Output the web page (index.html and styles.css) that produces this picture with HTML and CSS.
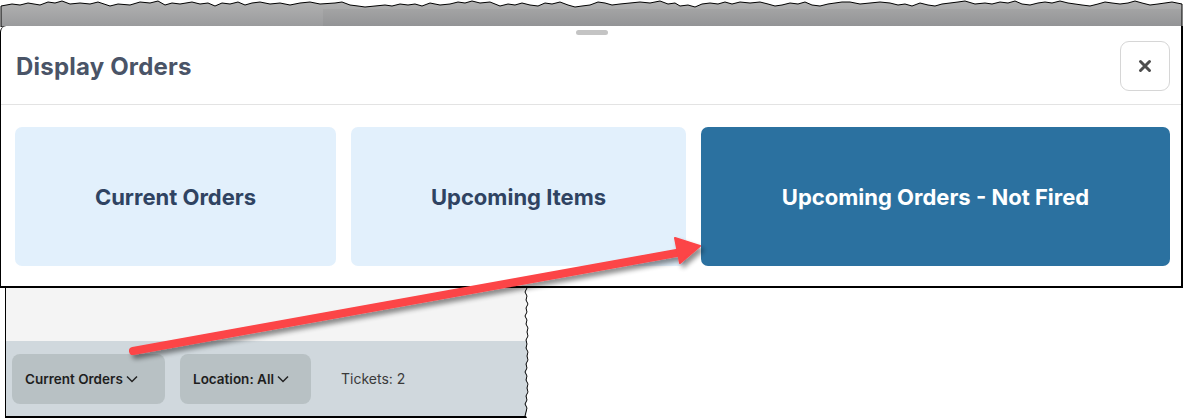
FILE: index.html
```html
<!DOCTYPE html>
<html lang="en">
<head>
    <meta charset="UTF-8">
    <title>Display Orders</title>
    <link rel="stylesheet" href="styles.css">
</head>
<body>
    <div class="shot">
        <div class="torn-top">
            <svg width="1183" height="27" viewBox="0 0 1183 27">
                <defs>
                    <linearGradient id="tg" x1="0" y1="0" x2="0" y2="1">
                        <stop offset="0" stop-color="#b2b2b2"/>
                        <stop offset="1" stop-color="#999a9c"/>
                    </linearGradient>
                </defs>
                <path d="M1 27 L1 6 L12 4 L20 5 L28 3 L40 5 L48 2 L55 3 L62 1 L70 4 L80 3 L90 4 L98 2 L110 6 L118 4 L130 5 L140 2 L150 3 L158 1 L165 5 L172 3 L180 4 L192 2 L200 4 L208 3 L215 6 L222 3 L230 4 L238 2 L245 5 L252 3 L260 2 L270 4 L280 3 L290 5 L300 3 L310 2 L320 4 L335 3 L342 2 L350 5 L358 6 L365 7 L375 6 L385 5 L392 6 L400 4 L408 5 L415 4 L422 6 L430 3 L440 5 L450 4 L458 2 L465 3 L472 1 L480 3 L490 2 L500 6 L508 4 L515 5 L522 3 L530 5 L538 6 L545 3 L552 4 L560 2 L568 5 L575 7 L582 6 L590 5 L598 2 L605 3 L612 5 L620 4 L630 3 L640 2 L650 3 L660 1 L668 4 L675 3 L680 6 L688 5 L695 7 L702 4 L710 3 L718 4 L725 2 L732 4 L740 2 L750 3 L760 2 L768 4 L775 6 L782 5 L790 3 L798 4 L805 2 L812 5 L820 6 L828 4 L835 3 L842 2 L850 2 L860 4 L870 3 L880 2 L890 3 L898 5 L905 4 L912 6 L920 3 L928 5 L935 6 L942 4 L950 3 L958 2 L965 1 L975 4 L985 3 L992 4 L1000 2 L1008 3 L1015 1 L1022 4 L1030 5 L1038 3 L1045 2 L1052 3 L1060 1 L1068 3 L1075 4 L1082 5 L1090 6 L1098 4 L1105 2 L1112 3 L1120 4 L1128 3 L1135 1 L1142 3 L1150 5 L1158 4 L1165 3 L1172 2 L1182 4 L1182 27 Z" fill="url(#tg)" stroke="#000" stroke-width="1"/>
                <rect x="323" y="9" width="859" height="18" fill="#000" opacity="0.04"/>
            </svg>
        </div>

        <div class="modal">
            <div class="handle"></div>
            <div class="modal-head">
                <h1 class="title">Display Orders</h1>
                <button class="close">
                    <svg width="14" height="14" viewBox="0 0 14 14">
                        <path d="M2.5 2.5 L11.5 11.5 M11.5 2.5 L2.5 11.5" stroke="#4d4d4d" stroke-width="3" stroke-linecap="round"/>
                    </svg>
                </button>
            </div>
            <div class="options">
                <button class="option">Current Orders</button>
                <button class="option">Upcoming Items</button>
                <button class="option active">Upcoming Orders - Not Fired</button>
            </div>
        </div>

        <div class="under">
            <div class="blank"></div>
            <div class="toolbar">
                <button class="drop">Current Orders
                    <svg width="12" height="8" viewBox="0 0 12 8"><path d="M1 1.5 L6 6.5 L11 1.5" fill="none" stroke="#222" stroke-width="1.5"/></svg>
                </button>
                <button class="drop">Location: All
                    <svg width="12" height="8" viewBox="0 0 12 8"><path d="M1 1.5 L6 6.5 L11 1.5" fill="none" stroke="#222" stroke-width="1.5"/></svg>
                </button>
                <span class="tickets">Tickets: 2</span>
            </div>
            <svg class="torn-right" width="12" height="132" viewBox="0 0 12 132">
                <path d="M6 0 L4 4 L6 8 L5 12 L7 16 L5 20 L6 24 L4 28 L6 32 L5 36 L7 40 L6 44 L7 48 L5 52 L6 56 L5 60 L7 64 L6 68 L7 72 L5 76 L6 80 L4 84 L6 88 L5 92 L7 96 L6 100 L7 104 L5 108 L6 112 L4 116 L6 120 L5 124 L4 128 L6 132" fill="none" stroke="#000" stroke-width="1"/>
                <path d="M7 0 L5 4 L7 8 L6 12 L8 16 L6 20 L7 24 L5 28 L7 32 L6 36 L8 40 L7 44 L8 48 L6 52 L7 56 L6 60 L8 64 L7 68 L8 72 L6 76 L7 80 L5 84 L7 88 L6 92 L8 96 L7 100 L8 104 L6 108 L7 112 L5 116 L7 120 L6 124 L5 128 L7 132 L12 132 L12 0 Z" fill="#fff"/>
            </svg>
        </div>

        <svg class="arrow" width="1183" height="418" viewBox="0 0 1183 418">
            <defs>
                <filter id="sh" x="-10%" y="-10%" width="120%" height="130%">
                    <feGaussianBlur in="SourceAlpha" stdDeviation="2.5"/>
                    <feOffset dx="3" dy="4"/>
                    <feComponentTransfer><feFuncA type="linear" slope="0.45"/></feComponentTransfer>
                    <feMerge><feMergeNode/><feMergeNode in="SourceGraphic"/></feMerge>
                </filter>
            </defs>
            <g filter="url(#sh)">
                <line x1="133" y1="351" x2="682" y2="252" stroke="#fc4447" stroke-width="8" stroke-linecap="round"/>
                <path d="M675 238 L700 246 L680 263 Z" fill="#fc4447" stroke="#fc4447" stroke-width="2" stroke-linejoin="round"/>
            </g>
        </svg>
    </div>
</body>
</html>
```

FILE: styles.css
```css
body{
    margin:0;
    padding:0;
    background-color: #fff;
    font-family: Inter, "Noto Sans", sans-serif;
}

.shot{
    position: relative;
    width:1183px;
    height:418px;
    overflow: hidden;
}

.torn-top{
    height:27px;
    margin-bottom:-1px;
}
.torn-top svg{
    display: block;
}

.modal{
    background-color: #fff;
    border-left: 1px solid #000;
    border-right: 2px solid #000;
    border-bottom: 2px solid #000;
    border-top-left-radius: 6px;
    height:260px;
    box-sizing: content-box;
    position: relative;
}
.handle{
    position: absolute;
    top:4px;
    left:575px;
    width:32px;
    height:5px;
    border-radius: 3px;
    background-color: #c4c4c4;
}
.modal-head{
    display: flex;
    align-items: center;
    justify-content: space-between;
    height:79px;
    padding:3px 11px 0 15px;
    box-sizing: border-box;
    border-bottom: 1px solid #e3e3e3;
}
.title{
    margin:0;
    font-size: 24px;
    font-weight: 700;
    color: #4a5467;
    letter-spacing: 0.2px;
}
.close{
    width:50px;
    height:50px;
    margin-top:-2px;
    border:1px solid #d6d6d6;
    border-radius: 9px;
    background-color: #fff;
    display: flex;
    align-items: center;
    justify-content: center;
    padding:0;
}

.options{
    display: grid;
    grid-template-columns: 321px 335px 469px;
    gap:15px;
    padding:22px 0 0 14px;
}
.option{
    height:139px;
    border:none;
    border-radius: 7px;
    background-color: #e2f0fc;
    color: #2f4362;
    font-family: Inter, "Noto Sans", sans-serif;
    font-size: 22px;
    font-weight: 700;
    padding:0;
}
.option.active{
    background-color: #2b71a0;
    color: #fff;
}

.under{
    position: relative;
    width:521px;
    height:128px;
    border-left: 1px solid #000;
    border-bottom: 2px solid #000;
    margin-left:5px;
}
.blank{
    height:53px;
    background-color: #f4f4f4;
}
.toolbar{
    height:75px;
    background-color: #d0d8dd;
    display: flex;
    align-items: center;
    gap:15px;
    padding-left:6px;
}
.drop{
    height:50px;
    border:none;
    border-radius: 8px;
    background-color: #b8c1c4;
    font-family: Inter, "Noto Sans", sans-serif;
    font-size: 13.5px;
    font-weight: 600;
    color: #1e1e1e;
    display: flex;
    align-items: center;
    gap:3px;
    padding:0 13px;
}
.drop:first-child{
    width:153px;
}
.drop:nth-child(2){
    width:131px;
}
.tickets{
    margin-left:15px;
    font-size: 14px;
    color: #3a3a3a;
}
.torn-right{
    position: absolute;
    top:0;
    right:-6px;
}

.arrow{
    position: absolute;
    top:0;
    left:0;
    pointer-events: none;
}
```
